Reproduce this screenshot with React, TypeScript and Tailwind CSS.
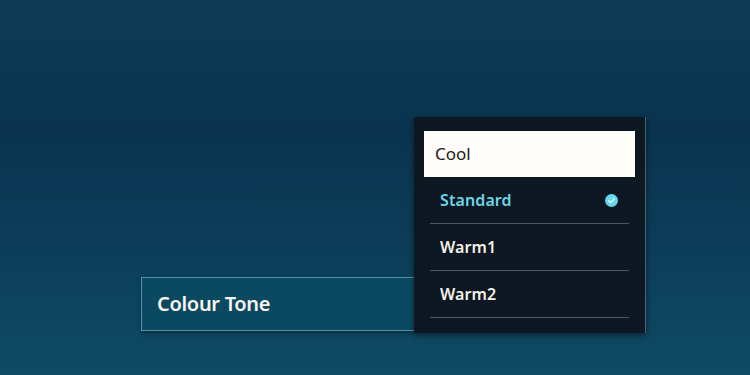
import React from "react";

const font = { fontFamily: '"Noto Sans", "Open Sans", sans-serif' };

function Row({ label, active }: { label: string; active?: boolean }) {
  return (
    <div className="mx-[16px] flex h-[47px] items-center justify-between border-b border-[#46586a]">
      <span
        className={
          "pl-[10px] text-[16px] font-semibold tracking-[0.1px] " +
          (active ? "text-[#6ad6e8]" : "text-[#f4f1e8]")
        }
      >
        {label}
      </span>
      {active && (
        <svg width="13" height="13" viewBox="0 0 13 13" className="mr-[11px]">
          <circle cx="6.5" cy="6.5" r="6.5" fill="#66d8ea" />
          <path d="M3.8 6.8 L5.8 8.6 L9.2 4.6" stroke="#e8fbff" strokeWidth="1.4" fill="none" strokeLinecap="round" strokeLinejoin="round" />
        </svg>
      )}
    </div>
  );
}

export default function App() {
  return (
    <div
      className="flex h-[375px] w-[750px] items-start overflow-hidden bg-[linear-gradient(180deg,#0d3b54_0%,#0a3450_35%,#0c3f5a_70%,#0f4b64_100%)] pl-[141px] pt-[117px]"
      style={font}
    >
      <div className="flex items-end">
        <div className="mb-[2px] flex h-[54px] w-[273px] items-center border border-r-0 border-[#5293aa] bg-[#0b4861] pl-[15px] shadow-[0_2px_4px_rgba(0,0,0,0.35)]">
          <span className="text-[20px] font-semibold tracking-[-0.3px] text-[#f7f5ee]">Colour Tone</span>
        </div>
        <div className="flex h-[216px] w-[232px] flex-col border-r border-[#4a6476] bg-[#0d1822] pt-[14px] shadow-[0_2px_6px_rgba(0,0,0,0.5)]">
          <div className="mx-[10px] flex h-[46px] items-center bg-[#fffefa] pl-[11px]">
            <span className="text-[17px] text-[#1b1b1b]">Cool</span>
          </div>
          <Row label="Standard" active />
          <Row label="Warm1" />
          <Row label="Warm2" />
        </div>
      </div>
    </div>
  );
}
